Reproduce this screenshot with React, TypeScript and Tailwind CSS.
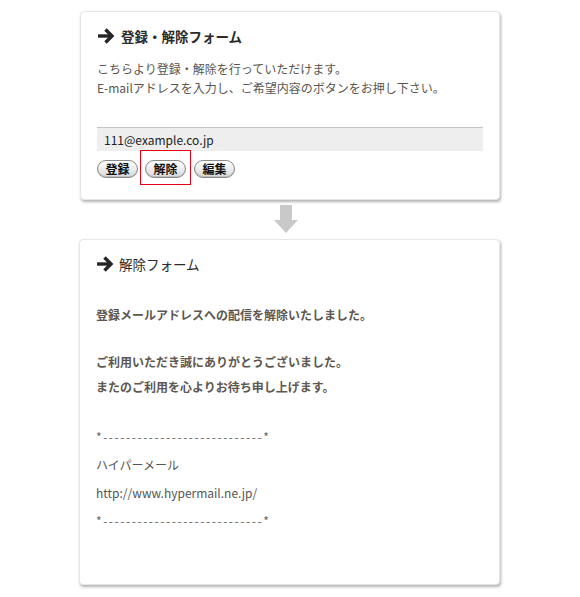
const FONT = "font-['Noto_Sans_CJK_JP','Noto_Sans',sans-serif]";

function TitleArrow() {
  return (
    <svg width="18" height="18" viewBox="0 0 18 18" className="shrink-0">
      <path d="M1 9 H14" stroke="#262626" strokeWidth="3.4" />
      <path d="M8.5 2.5 L15 9 L8.5 15.5" stroke="#262626" strokeWidth="3.4" fill="none" strokeLinejoin="miter" />
    </svg>
  );
}

function PillButton({ label }: { label: string }) {
  return (
    <button className="flex h-[18px] w-[41px] items-center justify-center rounded-full border border-[#8a8a8a] bg-gradient-to-b from-white to-[#d9d9d9] text-[12px] leading-none font-bold text-[#111] shadow-[inset_0_-1px_0_#bdbdbd]">
      {label}
    </button>
  );
}

function Card({ children, className }: { children: React.ReactNode; className: string }) {
  return (
    <div
      className={`rounded-[4px] border border-[#e6e6e6] bg-white px-[16px] shadow-[1px_2px_3px_rgba(0,0,0,0.3)] ${className}`}
    >
      {children}
    </div>
  );
}

export default function App() {
  const dashes = '*' + '-'.repeat(28) + '*';
  return (
    <div className={`h-[597px] w-[580px] bg-white ${FONT}`}>
      <div className="flex flex-col pt-[11px]">
        <Card className="ml-[80px] h-[189px] w-[420px]">
          <div className="mt-[14px] flex h-[20px] items-center gap-[6px]">
            <TitleArrow />
            <span className="text-[13.5px] font-bold text-[#2b2b2b]">登録・解除フォーム</span>
          </div>
          <div className="mt-[13px] text-[12px] leading-[19px] text-[#5a5550]">
            <p>こちらより登録・解除を行っていただけます。</p>
            <p>E-mailアドレスを入力し、ご希望内容のボタンをお押し下さい。</p>
          </div>
          <div className="mt-[30px] flex h-[24px] w-[386px] items-center border-t border-[#c4c4c4] bg-[#eeeeee] pl-[7px] text-[12px] text-[#222]">
            111@example.co.jp
          </div>
          <div className="mt-[9px] flex items-start gap-[7px]">
            <PillButton label="登録" />
            <div className="relative flex">
              <PillButton label="解除" />
              <span className="pointer-events-none absolute -top-[9px] -bottom-[6px] -left-[4px] -right-[4px] shadow-[0_0_0_1px_#e60012]" />
            </div>
            <div className="ml-[1px] flex">
              <PillButton label="編集" />
            </div>
          </div>
        </Card>

        <div className="flex h-[39px] items-center justify-center">
          <svg width="26" height="29" viewBox="0 0 26 29" className="mr-[9px]">
            <path d="M7 0 H19 V15 H25 L13 28 L1 15 H7 Z" fill="#c9c9c9" />
          </svg>
        </div>

        <Card className="ml-[79px] h-[346px] w-[421px]">
          <div className="mt-[14px] flex h-[20px] items-center gap-[5px]">
            <TitleArrow />
            <span className="text-[13.5px] text-[#2b2b2b]">解除フォーム</span>
          </div>
          <div className="mt-[28px] text-[12px] leading-[25px] font-bold text-[#5e5750]">
            <p>登録メールアドレスへの配信を解除いたしました。</p>
            <p className="mt-[22px]">ご利用いただき誠にありがとうございました。</p>
            <p>またのご利用を心よりお待ち申し上げます。</p>
          </div>
          <div className="mt-[24px] text-[12px] leading-[28px] text-[#555]">
            <p className="tracking-[1.55px] text-[#666]">{dashes}</p>
            <p>ハイパーメール</p>
            <p>http://www.hypermail.ne.jp/</p>
            <p className="tracking-[1.55px] text-[#666]">{dashes}</p>
          </div>
        </Card>
      </div>
    </div>
  );
}
